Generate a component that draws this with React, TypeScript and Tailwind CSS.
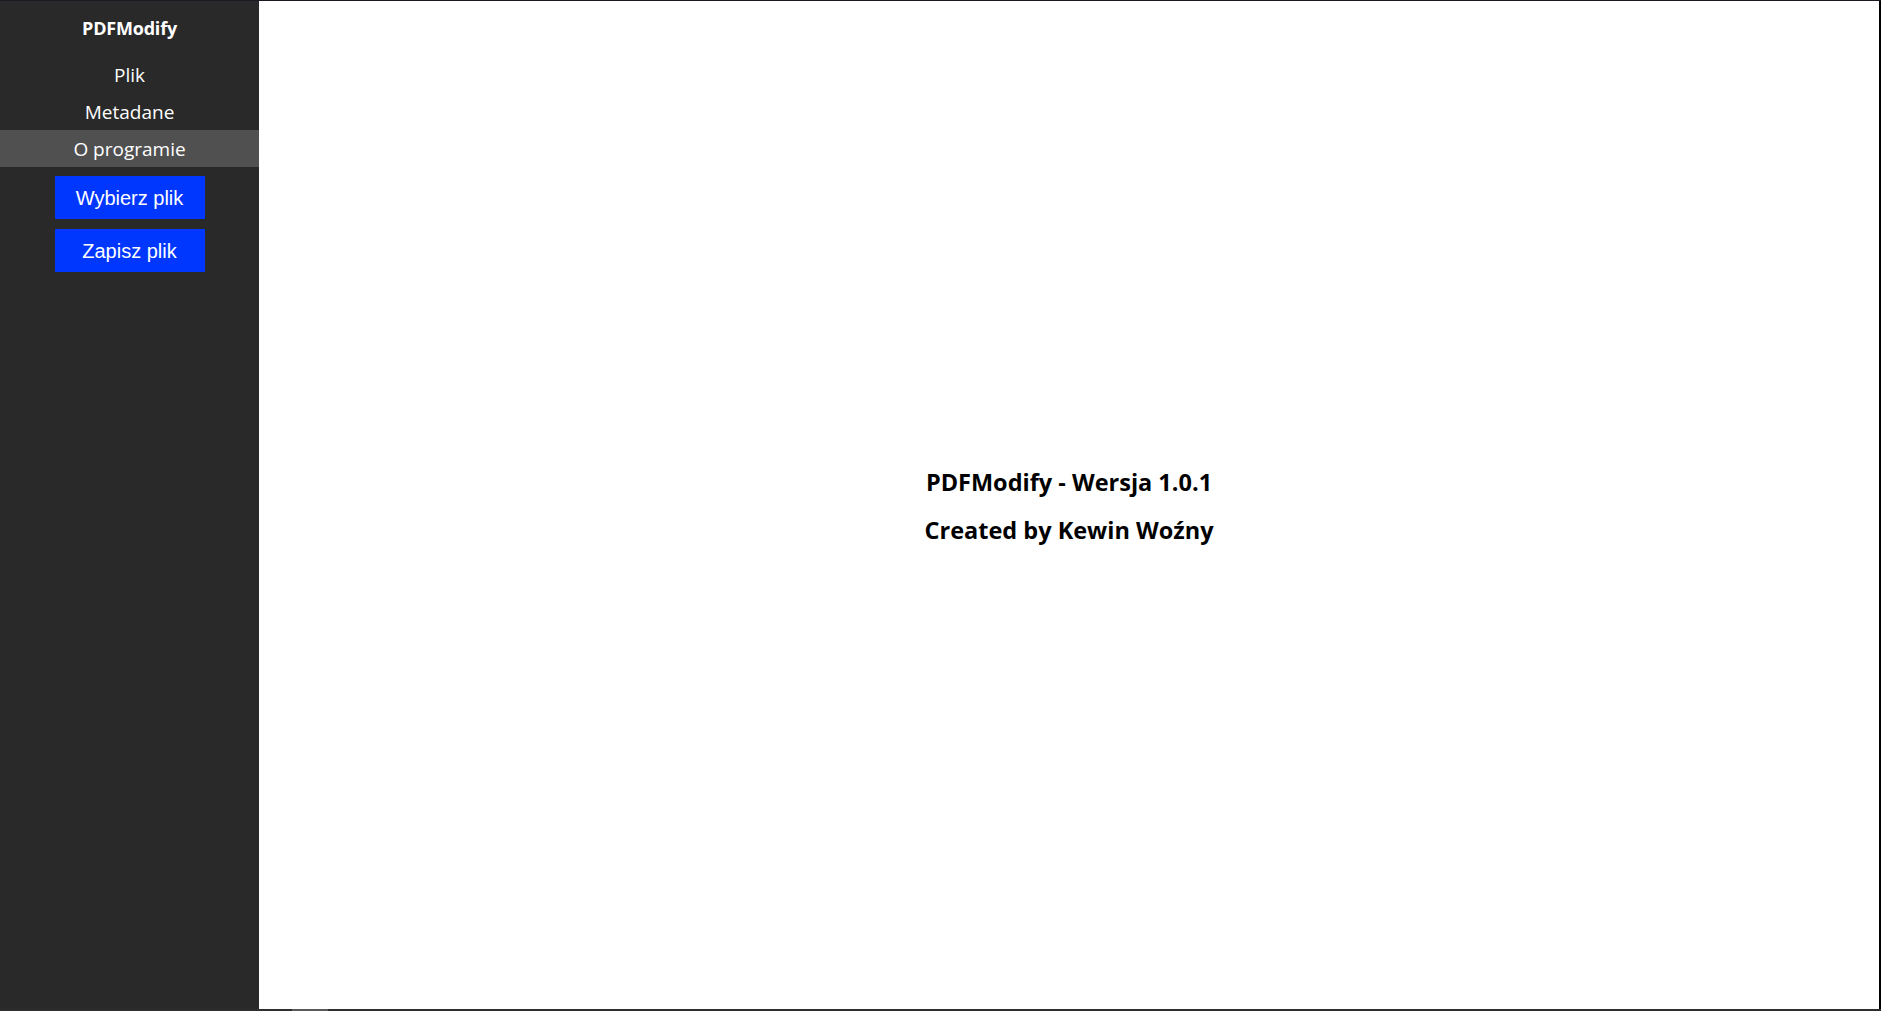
const font = { fontFamily: '"Open Sans", "Noto Sans", sans-serif' };

export default function App() {
  const items = ["Plik", "Metadane", "O programie"];
  const active = "O programie";

  return (
    <div className="w-[1881px] h-[1011px] flex flex-col bg-[#1c1c1c] overflow-hidden" style={font}>
      <div className="h-px bg-[#1a1a22]" />
      <div className="flex flex-1 min-h-0">
        {/* Sidebar */}
        <aside className="w-[259px] bg-[#292929] flex flex-col items-center text-white">
          <div className="h-[55px] w-full flex items-center justify-center text-[18px] font-bold tracking-[-0.2px]">
            PDFModify
          </div>
          {items.map((it) => (
            <div
              key={it}
              className={`h-[37px] w-full flex items-center justify-center pt-[2px] text-[19px] ${
                it === active ? "bg-[#505050]" : ""
              }`}
            >
              {it}
            </div>
          ))}
          <div className="flex flex-col gap-[10px] mt-[9px]" style={{ fontFamily: '"Liberation Sans", Arial, sans-serif' }}>
            <button className="w-[150px] h-[43px] bg-[#0037ff] text-white text-[20px]">Wybierz plik</button>
            <button className="w-[150px] h-[43px] bg-[#0037ff] text-white text-[20px]">Zapisz plik</button>
          </div>
        </aside>

        {/* Main */}
        <main className="flex-1 bg-white flex flex-col items-center justify-center gap-[12px] pt-[2px] text-black font-bold text-[23.5px] leading-[36px]">
          <div>PDFModify - Wersja 1.0.1</div>
          <div>Created by Kewin Woźny</div>
        </main>
        <div className="w-[2px] bg-black" />
      </div>
      <div className="h-[2px] bg-[#2e2e2e] flex">
        <div className="ml-[292px] w-[36px] bg-[#5a5a5a]" />
      </div>
    </div>
  );
}
